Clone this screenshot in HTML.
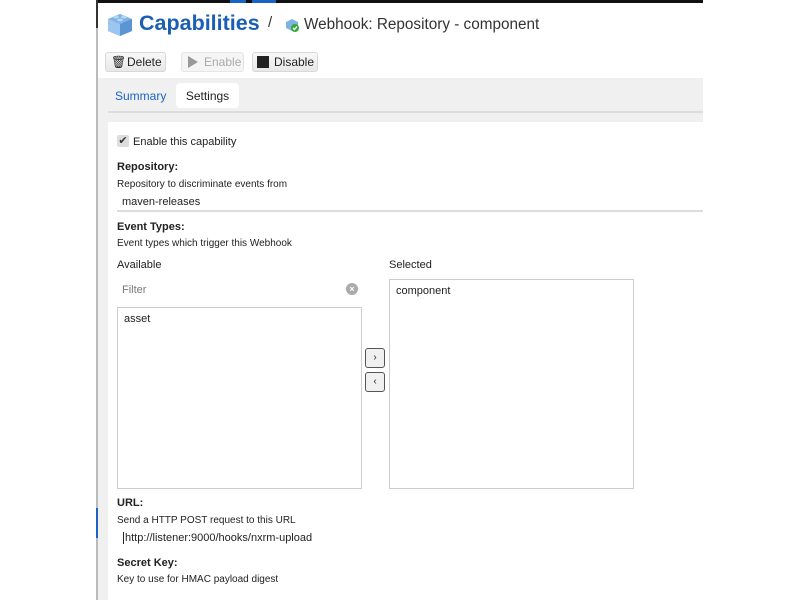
<!DOCTYPE html>
<html><head><meta charset="utf-8"><style>
*{margin:0;padding:0;box-sizing:border-box}
body{width:800px;height:600px;overflow:hidden;background:#fff;font-family:"Liberation Sans",sans-serif;color:#222;position:relative}
.a{position:absolute}
.btn{position:absolute;top:52px;height:20px;border:1px solid #d8d8d8;border-radius:3px;background:linear-gradient(#f8f8f8,#e8e8e8);font-size:12px;line-height:19px;color:#222}
.lbl{position:absolute;font-size:11px;font-weight:bold;left:117px}
.desc{position:absolute;font-size:10px;left:117px;color:#222}
</style></head><body>
<div class="a" style="left:96px;top:0;width:607px;height:3px;background:#111"></div>
<div class="a" style="left:230px;top:0;width:16px;height:3px;background:#1a63c5"></div>
<div class="a" style="left:252px;top:0;width:24px;height:3px;background:#1a63c5"></div>
<div class="a" style="left:96px;top:0;width:2px;height:600px;background:#bbb"></div>
<div class="a" style="left:96px;top:0;width:2px;height:28px;background:#333"></div>
<div class="a" style="left:96px;top:508px;width:2px;height:30px;background:#1a63c5"></div>
<svg class="a" style="left:106px;top:10px" width="28" height="28" viewBox="0 0 28 28">
<polygon points="14,4 26,9 26,21 14,26 2,21 2,9" fill="#7fb2e5"/>
<polygon points="14,14 26,9 26,21 14,26" fill="#5b95d3"/>
<polygon points="2,9 14,14 14,26 2,21" fill="#9cc6ef"/>
<ellipse cx="10" cy="7" rx="3" ry="1.5" fill="#b5d6f5"/><ellipse cx="18" cy="7" rx="3" ry="1.5" fill="#b5d6f5"/><ellipse cx="14" cy="10" rx="3" ry="1.5" fill="#b5d6f5"/></svg>
<div class="a" style="left:139px;top:11px;font-size:21.5px;font-weight:bold;color:#1a5fb4">Capabilities</div>
<div class="a" style="left:268px;top:14px;font-size:15px;color:#333">/</div>
<svg class="a" style="left:284px;top:17px" width="16" height="16" viewBox="0 0 16 16"><polygon points="8,2 14,5 14,11 8,14 2,11 2,5" fill="#7fb2e5"/><circle cx="11" cy="11" r="4" fill="#3a3"/><path d="M9 11l1.5 1.5L13 9.5" stroke="#fff" fill="none" stroke-width="1.3"/></svg>
<div class="a" style="left:304px;top:16px;font-size:15.3px;color:#333">Webhook: Repository - component</div>
<div class="btn" style="left:105px;width:61px"><span style="position:absolute;left:5px;top:0;font-size:12px">🗑</span><span style="position:absolute;left:21px">Delete</span></div>
<div class="btn" style="left:181px;width:63px;color:#aaa;background:#f5f5f5;border-color:#e5e5e5"><svg style="position:absolute;left:5px;top:3px" width="12" height="12"><polygon points="1,0 11,6 1,12" fill="#999"/></svg><span style="position:absolute;left:22px">Enable</span></div>
<div class="btn" style="left:252px;width:66px"><span style="position:absolute;left:4px;top:3px;width:12px;height:12px;background:#222"></span><span style="position:absolute;left:21px">Disable</span></div>
<div class="a" style="left:98px;top:78px;width:605px;height:44px;background:#f0f0f0"></div>
<div class="a" style="left:98px;top:111px;width:605px;height:2px;background:#ddd"></div>
<div class="a" style="left:98px;top:78px;width:10px;height:522px;background:#f0f0f0"></div>
<div class="a" style="left:115px;top:89px;font-size:12px;color:#1a63c5">Summary</div>
<div class="a" style="left:176px;top:83px;width:63px;height:25px;background:#fff;border-radius:4px;font-size:12px;line-height:26px;text-align:center">Settings</div>
<div class="a" style="left:108px;top:122px;width:595px;height:478px;background:#fff"></div>
<div class="a" style="left:117px;top:135px;width:12px;height:12px;background:#ddd;border-radius:2px;font-size:11px;line-height:12px;text-align:center;color:#333">✔</div>
<div class="a" style="left:133px;top:136px;font-size:11px">Enable this capability</div>
<div class="lbl" style="top:161px">Repository:</div>
<div class="desc" style="top:179px">Repository to discriminate events from</div>
<div class="a" style="left:122px;top:196px;font-size:11px">maven-releases</div>
<div class="a" style="left:117px;top:210px;width:586px;height:2px;background:#ddd"></div>
<div class="lbl" style="top:221px">Event Types:</div>
<div class="desc" style="top:238px">Event types which trigger this Webhook</div>
<div class="a" style="left:117px;top:259px;font-size:11px">Available</div>
<div class="a" style="left:389px;top:259px;font-size:11px">Selected</div>
<div class="a" style="left:122px;top:284px;font-size:11px;color:#777">Filter</div>
<div class="a" style="left:346px;top:283px;width:12px;height:12px;border-radius:6px;background:#aaa;color:#fff;font-size:9px;line-height:12px;text-align:center;font-weight:bold">×</div>
<div class="a" style="left:117px;top:307px;width:245px;height:182px;border:1px solid #ccc"></div>
<div class="a" style="left:124px;top:313px;font-size:11px">asset</div>
<div class="a" style="left:389px;top:279px;width:245px;height:210px;border:1px solid #ccc"></div>
<div class="a" style="left:396px;top:285px;font-size:11px">component</div>
<div class="a" style="left:365px;top:348px;width:20px;height:20px;border:1px solid #555;border-radius:3px;background:#f0f0f0;font-size:10px;line-height:18px;text-align:center">›</div>
<div class="a" style="left:365px;top:372px;width:20px;height:20px;border:1px solid #555;border-radius:3px;background:#f0f0f0;font-size:10px;line-height:18px;text-align:center">‹</div>
<div class="lbl" style="top:497px">URL:</div>
<div class="desc" style="top:515px">Send a HTTP POST request to this URL</div>
<div class="a" style="left:123px;top:532px;font-size:11px;border-left:1px solid #222;padding-left:1px">http://listener:9000/hooks/nxrm-upload</div>
<div class="lbl" style="top:557px">Secret Key:</div>
<div class="desc" style="top:574px">Key to use for HMAC payload digest</div>
</body></html>
